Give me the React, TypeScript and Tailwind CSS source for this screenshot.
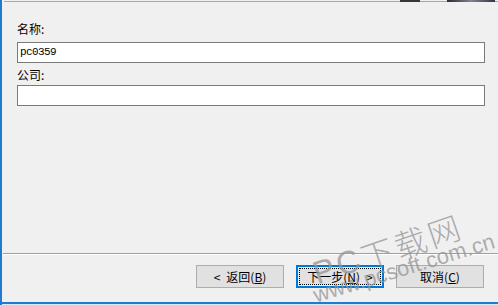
import React from "react";

const cjk = "font-['Noto_Sans_CJK_SC','Microsoft_YaHei',sans-serif]";

const DialogButton = ({
  children,
  focused = false,
}: {
  children: React.ReactNode;
  focused?: boolean;
}) => {
  if (focused) {
    return (
      <div className="w-[88px] h-[23px] border-2 border-[#0078d7] bg-[#e5f1fb] p-px">
        <div className="h-full border border-dotted border-black flex items-center justify-center text-[12px] leading-none text-black bg-[#e1e1e1]">
          {children}
        </div>
      </div>
    );
  }
  return (
    <div className="w-[88px] h-[23px] border border-[#adadad] bg-[#e1e1e1] flex items-center justify-center text-[12px] leading-none text-black">
      {children}
    </div>
  );
};

export default function App() {
  return (
    <div
      className={`relative w-[498px] h-[305px] bg-[#f0f0f0] overflow-hidden flex flex-col border-l-2 border-[#1f7bd2] ${cjk}`}
    >
      {/* header edge */}
      <div className="h-[2px] border-b border-[#a7a7a7] ml-[2px]" />
      <div className="absolute top-0 right-[3px] w-[48px] h-[2px] bg-gradient-to-r from-[#2e2a33] via-[#8a8090] to-[#3a3540]" />
      <div className="absolute top-0 right-[78px] w-[20px] h-[2px] bg-[#3a3638]" />

      <div className="pl-[15px] pr-[13px] pt-[19px] flex flex-col">
        <div className="h-[16px] leading-[16px] text-[12px] text-black">名称:</div>
        <div className="mt-[5px] h-[21px] border border-[#7a7a7a] bg-white flex items-center pl-[2px]">
          <span className="font-['Liberation_Mono',monospace] text-[11px] tracking-[-0.6px] text-black leading-none">
            pc0359
          </span>
        </div>
        <div className="mt-[4px] h-[16px] leading-[16px] text-[12px] text-black">公司:</div>
        <div className="mt-[2px] h-[21px] border border-[#7a7a7a] bg-white" />
      </div>

      <div className="flex-1" />

      <div className="ml-px h-px bg-[#a0a0a0]" />
      <div className="ml-px h-px bg-white" />
      <div className="flex justify-end gap-[12px] pr-[14px] pt-[10px] pb-[14px]">
        <DialogButton>
          <span className="mr-[6px]">&lt;</span>返回(<span className="underline">B</span>)
        </DialogButton>
        <DialogButton focused>
          下一步(<span className="underline">N</span>)<span className="ml-[6px]">&gt;</span>
        </DialogButton>
        <DialogButton>
          取消(<span className="underline">C</span>)
        </DialogButton>
      </div>
      <div className="h-[2px] bg-[#1f7bd2]" />
      <div className="h-px bg-[#dce8f4]" />

      {/* watermark */}
      <div className="absolute left-[312px] top-[258px] -rotate-[19deg] origin-left pointer-events-none text-[#949494]/75 text-[32px] leading-none font-['Liberation_Sans',sans-serif] flex items-end gap-[3px]">
        <span>P</span>
        <span>C</span>
        <span className={`${cjk} font-light`}>下</span>
        <span className={`${cjk} font-light`}>载</span>
        <span className={`${cjk} font-light`}>网</span>
      </div>
      <div className="absolute left-[312px] top-[285px] -rotate-[17deg] origin-left pointer-events-none text-[#949494]/75 text-[22px] leading-none font-['Liberation_Sans',sans-serif]">
        www.pcsoft.com.cn
      </div>
    </div>
  );
}
